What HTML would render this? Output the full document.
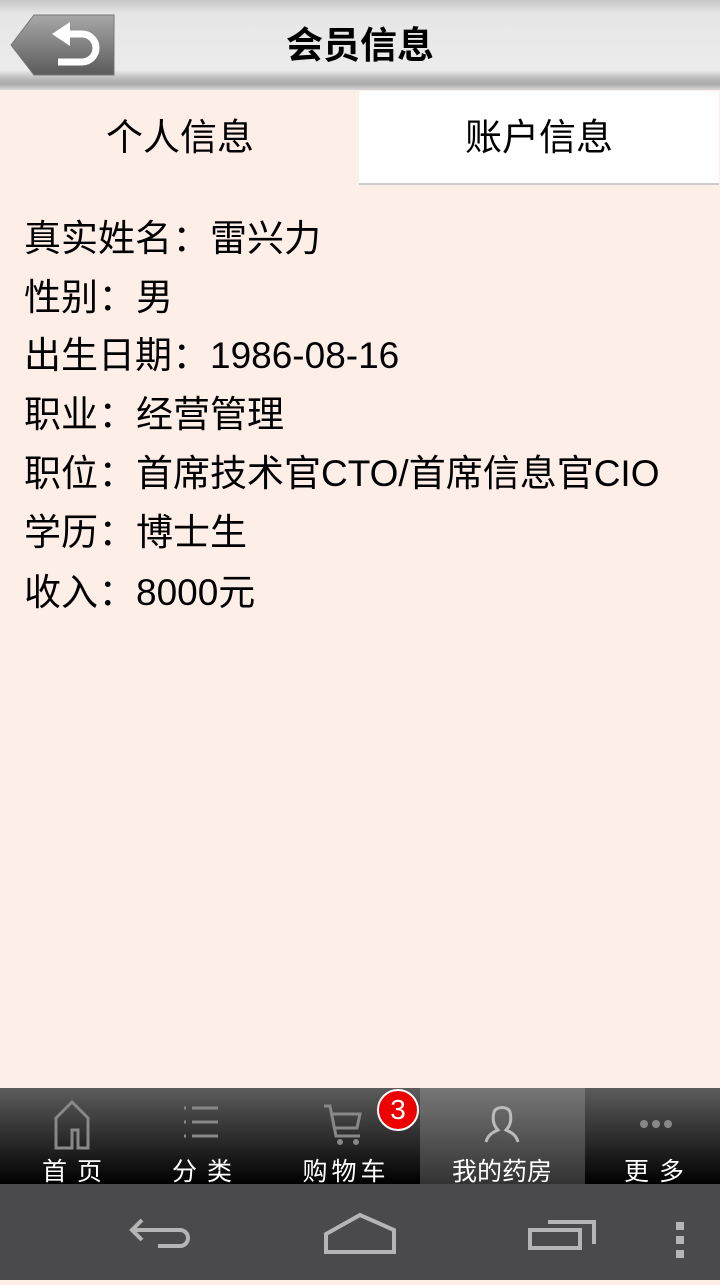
<!DOCTYPE html><html><head><meta charset="utf-8"><style>
body{margin:0;width:720px;height:1280px;position:relative;overflow:hidden;background:#fdeee8;font-family:"Liberation Sans","Noto Sans CJK SC",sans-serif}
.hd{position:absolute;left:0;top:0;width:720px;height:90px;background:linear-gradient(#c8c8c8 0,#e6e6e6 14px,#ececec 70px,#bdbdbd 78px,#a9a9a9 84px,#d8d8d8 90px)}
.hd h1{position:absolute;left:0;width:720px;top:21px;margin:0;text-align:center;font-size:37px;font-weight:bold;color:#000;line-height:50px}
.tab{position:absolute;top:91px;height:94px;line-height:94px;text-align:center;font-size:37px;color:#000}
.info{position:absolute;left:24px;font-size:37px;color:#000;white-space:nowrap;line-height:46px}
.c{display:inline-block;width:38px;text-align:center}
.nav{position:absolute;left:0;top:1088px;width:720px;height:96px;background:linear-gradient(#5c5c5c,#000)}
.it{position:absolute;top:0;width:144px;height:96px;text-align:center;color:#fff;font-size:25px}
.it span{position:absolute;left:0;right:0;top:64px;letter-spacing:10px;text-indent:10px}
.sys{position:absolute;left:0;top:1184px;width:720px;height:96px;background:#4a4a4c}
</style></head><body>
<div class="hd">
<svg style="position:absolute;left:10px;top:14px" width="106" height="62"><defs><linearGradient id="g" x1="0" y1="0" x2="0" y2="1"><stop offset="0" stop-color="#a8a8a8"/><stop offset="1" stop-color="#5a5a5a"/></linearGradient></defs><path d="M24 1H104V61H24L1 31Z" fill="url(#g)" stroke="#777"/><path d="M58 20H72a14 14 0 0 1 0 28H48" fill="none" stroke="#fff" stroke-width="7"/><path d="M42 20L60 8V32Z" fill="#fff"/></svg>
<h1>会员信息</h1></div>
<div class="tab" style="left:0;width:360px">个人信息</div>
<div class="tab" style="left:359px;width:360px;background:#fff;border-bottom:2px solid #ccc;height:92px">账户信息</div>
<div class="info" style="top:216px">真实姓名<span class="c">：</span>雷兴力</div>
<div class="info" style="top:275px">性别<span class="c">：</span>男</div>
<div class="info" style="top:333px">出生日期<span class="c">：</span>1986-08-16</div>
<div class="info" style="top:392px">职业<span class="c">：</span>经营管理</div>
<div class="info" style="top:451px">职位<span class="c">：</span>首席技术官CTO/首席信息官CIO</div>
<div class="info" style="top:510px">学历<span class="c">：</span>博士生</div>
<div class="info" style="top:570px">收入<span class="c">：</span>8000元</div>
<div class="nav">
<div style="position:absolute;left:420px;top:0;width:165px;height:96px;background:linear-gradient(#777,#333)"></div>
<div class="it" style="left:0"><svg width="60" height="60" style="margin-top:6px"><path d="M14 24L30 8 46 24V54H36V36H30V54H14Z" fill="none" stroke="#888" stroke-width="3"/></svg><span>首页</span></div>
<div class="it" style="left:130px"><svg width="60" height="60" style="margin-top:6px"><g stroke="#888" stroke-width="3"><path d="M12 14h2M12 28h2M12 42h2M20 14h26M20 28h26M20 42h26"/></g></svg><span>分类</span></div>
<div class="it" style="left:272px"><svg width="60" height="60" style="margin-top:6px"><path d="M10 12h6l6 30h24M18 20h28l-3 14H20" fill="none" stroke="#888" stroke-width="3"/><circle cx="26" cy="48" r="3" fill="#888"/><circle cx="42" cy="48" r="3" fill="#888"/></svg><span style="letter-spacing:4px;text-indent:4px">购物车</span></div>
<div style="position:absolute;left:377px;top:1px;border-radius:50%;background:#e00;border:2px solid #fff;color:#fff;font-size:28px;text-align:center;line-height:38px;box-sizing:border-box;width:42px;height:42px">3</div>
<div class="it" style="left:430px"><svg width="60" height="60" style="margin-top:6px"><path d="M14 48c2-8 8-10 12-12-4-4-6-10-4-18 2-6 14-6 16 0 2 8 0 14-4 18 4 2 10 4 12 12" fill="none" stroke="#bbb" stroke-width="3"/></svg><span style="letter-spacing:0;text-indent:0">我的药房</span></div>
<div class="it" style="left:582px"><svg width="60" height="60" style="margin-top:6px"><g fill="#888"><circle cx="20" cy="30" r="4"/><circle cx="32" cy="30" r="4"/><circle cx="44" cy="30" r="4"/></g></svg><span>更多</span></div>
</div>
<div class="sys"><svg width="720" height="96"><g fill="none" stroke="#b5b5b5" stroke-width="4"><path d="M142 36L132 46 142 56M132 46H180a8 8 0 0 1 0 16H158"/><path d="M326 52L360 33 394 48V70H326Z" transform="translate(0 -2)"/><path d="M530 64V46H580V64ZM548 38H594V60"/></g><g fill="#b5b5b5"><rect x="676" y="38" width="8" height="8"/><rect x="676" y="52" width="8" height="8"/><rect x="676" y="66" width="8" height="8"/></g></svg></div>
</body></html>
